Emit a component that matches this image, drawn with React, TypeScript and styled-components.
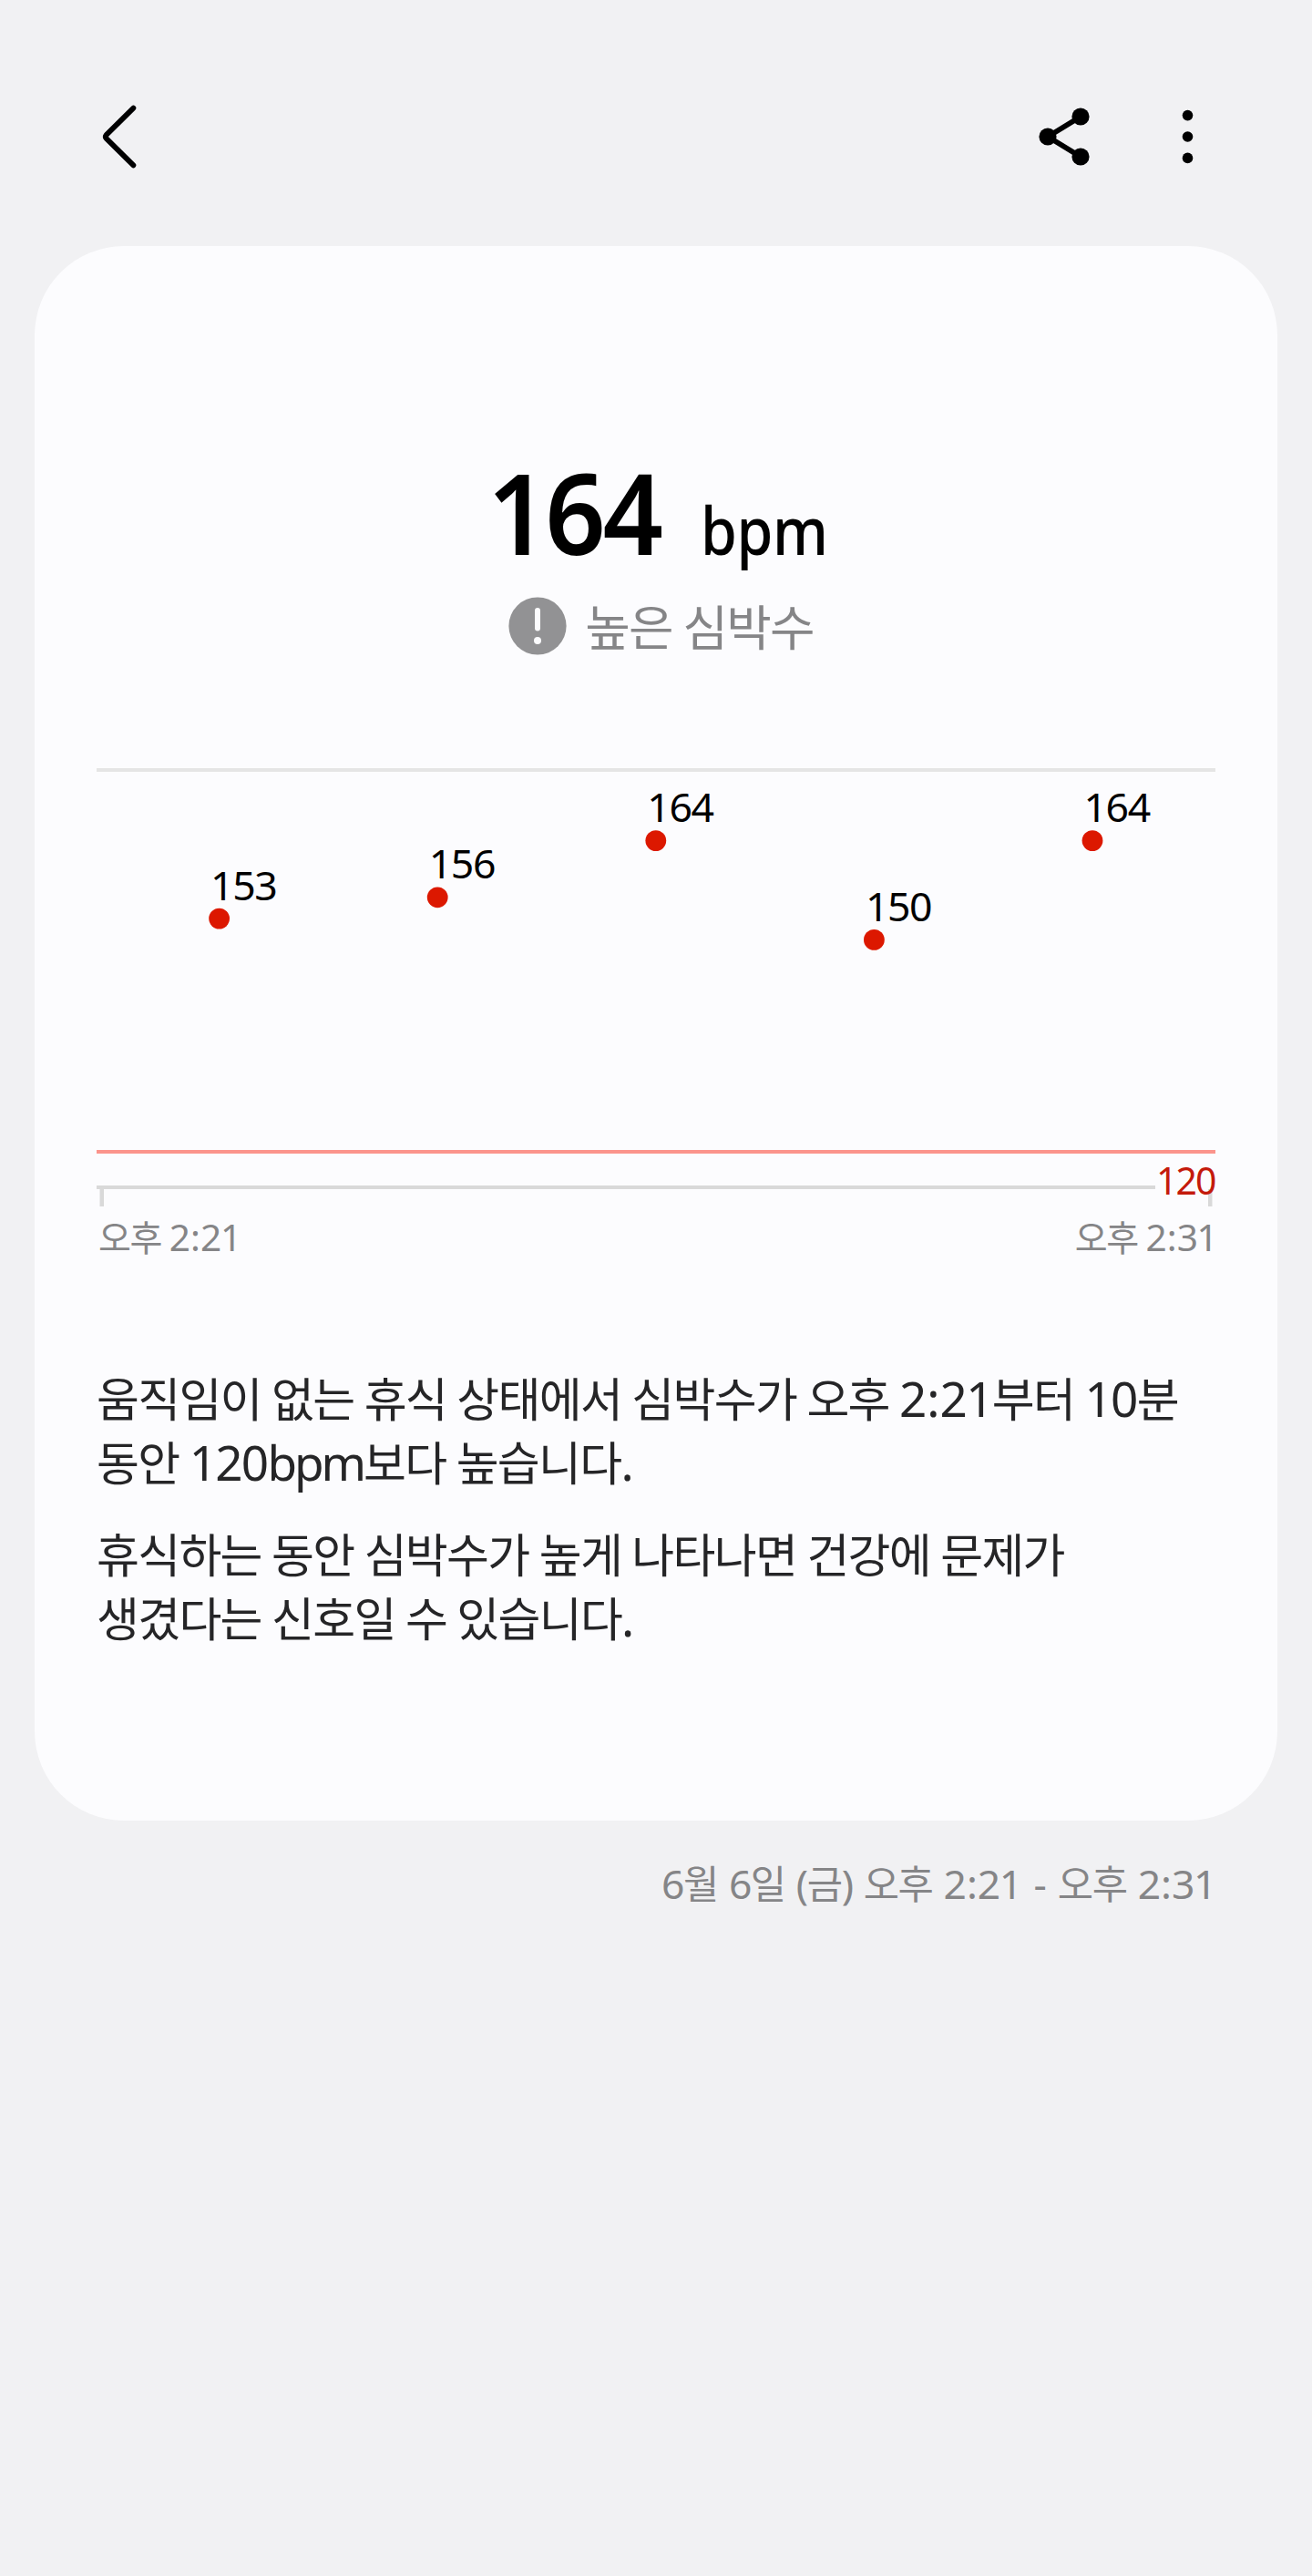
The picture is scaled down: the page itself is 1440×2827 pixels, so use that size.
import React from 'react';
import styled, { createGlobalStyle } from 'styled-components';

const GlobalStyle = createGlobalStyle`
  body {
    margin: 0;
    background: #f1f1f3;
    font-family: 'Noto Sans', 'Noto Sans CJK KR', sans-serif;
  }
`;

const Screen = styled.main`
  box-sizing: border-box;
  width: 1440px;
  min-height: 2827px;
  background: #f1f1f3;
`;

const Toolbar = styled.header`
  box-sizing: border-box;
  height: 270px;
  padding: 30px 100px 0 92px;
  display: flex;
  align-items: center;
  justify-content: space-between;
`;

const Actions = styled.div`
  display: flex;
  gap: 62px;
`;

const IconButton = styled.button`
  width: 72px;
  height: 72px;
  padding: 0;
  border: 0;
  background: none;
  color: #000;
  svg {
    display: block;
  }
`;

const Card = styled.section`
  box-sizing: border-box;
  height: 1728px;
  margin: 0 38px;
  padding: 208px 68px 0;
  border-radius: 98px;
  background: #fcfcfe;
`;

const Reading = styled.div`
  height: 168px;
  display: flex;
  justify-content: center;
  align-items: baseline;
  line-height: 168px;
  color: #000;
`;

const ReadingValue = styled.span`
  width: 202px;
  font-size: 123px;
  font-weight: 600;
  letter-spacing: -3.4px;
  transform: scaleX(0.945);
  transform-origin: left;
`;

const ReadingUnit = styled.span`
  width: 136px;
  margin-left: 32px;
  font-size: 72.5px;
  font-weight: 500;
  letter-spacing: -0.5px;
  transform: scaleX(0.888);
  transform-origin: left;
`;

const Status = styled.div`
  height: 64px;
  margin: 9px 0 124px;
  padding-left: 11px;
  display: flex;
  justify-content: center;
  align-items: center;
  gap: 20px;
  font-size: 56px;
  line-height: 64px;
  color: #858587;
`;

const RunText = styled.span<{ $wordSpacing?: string }>`
  letter-spacing: -0.032em;
  word-spacing: ${(p) => p.$wordSpacing ?? '-0.016em'};
  white-space: nowrap;
`;

const Hangul = styled.span`
  font-family: 'Noto Sans CJK KR', sans-serif;
  font-size: 0.962em;
  line-height: 0;
`;

const Mark = styled.span`
  padding: 0 0.033em;
`;

const Unit = styled.span`
  letter-spacing: -0.058em;
`;

const Chart = styled.svg`
  display: block;
  overflow: visible;
`;

const PointLabel = styled.text`
  font-size: 44.6px;
  letter-spacing: -1.4px;
  fill: #000;
`;

const LimitLabel = styled.text`
  font-size: 41px;
  letter-spacing: -2px;
  fill: #c41a0b;
`;

const TimeAxis = styled.div`
  height: 56px;
  margin-right: -1.5px;
  padding-left: 2px;
  display: flex;
  justify-content: space-between;
  font-size: 40.6px;
  line-height: 56px;
  color: #858587;
`;

const Description = styled.div`
  margin-top: 114px;
  display: flex;
  flex-direction: column;
  gap: 30.4px;
`;

const Paragraph = styled.p`
  margin: 0;
  font-size: 53px;
  line-height: 70.3px;
  color: #252527;
`;

const Period = styled.footer`
  padding: 37px 106px 0 0;
  text-align: right;
  font-size: 44.4px;
  line-height: 64px;
  color: #858587;
`;

/* Hangul runs are set slightly smaller than the Latin text around them. */
function Mixed({ children, wordSpacing }: { children: string; wordSpacing?: string }) {
  return (
    <RunText $wordSpacing={wordSpacing}>
      {children.split(/([가-힣]+|[:-]|bpm)/).map((run, i) => {
        if (i % 2 === 0) return run;
        if (run === ':' || run === '-') return <Mark key={i}>{run}</Mark>;
        if (run === 'bpm') return <Unit key={i}>{run}</Unit>;
        return <Hangul key={i}>{run}</Hangul>;
      })}
    </RunText>
  );
}

const LIMIT = 120;
const readings = [153, 156, 164, 150, 164];
const pointX = (index: number) => 134.6 + index * 239.6;
const pointY = (bpm: number) => 421.5 - (bpm - LIMIT) * 7.77;

function HeartRateChart() {
  return (
    <Chart width="1228" height="487" viewBox="0 0 1228 487">
      <rect y="0" width="1228" height="4" fill="#e5e5e5" />
      <rect y="419" width="1228" height="4" fill="#fb948c" />
      <rect y="458" width="1162" height="4" fill="#d9d9d9" />
      <rect x="3.5" y="462" width="4.5" height="19" fill="#d9d9d9" />
      <rect x="1220" y="462" width="4.5" height="19" fill="#d9d9d9" />
      {readings.map((bpm, i) => (
        <g key={i}>
          <circle cx={pointX(i)} cy={pointY(bpm)} r="11.4" fill="#dc1800" />
          <PointLabel x={pointX(i) - 9.5} y={pointY(bpm) - 20.4}>
            {bpm}
          </PointLabel>
        </g>
      ))}
      <LimitLabel x="1163" y="467.5">
        {LIMIT}
      </LimitLabel>
    </Chart>
  );
}

export default function App() {
  return (
    <>
      <GlobalStyle />
      <Screen>
        <Toolbar>
          <IconButton aria-label="뒤로">
            <svg width="72" height="72" viewBox="0 0 72 72" fill="none">
              <path
                d="M54.4 4.6 24.6 34.1Q23 36 24.6 37.9L54.4 67.4"
                stroke="currentColor"
                strokeWidth="5.8"
                strokeLinecap="round"
                strokeLinejoin="round"
              />
            </svg>
          </IconButton>
          <Actions>
            <IconButton aria-label="공유">
              <svg width="72" height="72" viewBox="0 0 72 72" fill="currentColor">
                <path d="M52 14 16 36 52 58" fill="none" stroke="currentColor" strokeWidth="5.6" />
                <circle cx="16" cy="36" r="9.6" />
                <circle cx="52" cy="14" r="9.6" />
                <circle cx="52" cy="58" r="9.6" />
              </svg>
            </IconButton>
            <IconButton aria-label="더보기">
              <svg width="72" height="72" viewBox="0 0 72 72" fill="currentColor">
                <circle cx="35.5" cy="12.6" r="5.8" />
                <circle cx="35.5" cy="36" r="5.8" />
                <circle cx="35.5" cy="59.4" r="5.8" />
              </svg>
            </IconButton>
          </Actions>
        </Toolbar>

        <Card>
          <Reading>
            <ReadingValue>164</ReadingValue>
            <ReadingUnit>bpm</ReadingUnit>
          </Reading>
          <Status>
            <svg width="64" height="64" viewBox="0 0 64 64">
              <circle cx="32" cy="32" r="31.6" fill="#929294" />
              <path d="M32 15V34.5" stroke="#fcfcfe" strokeWidth="6" strokeLinecap="round" />
              <circle cx="32" cy="48" r="4" fill="#fcfcfe" />
            </svg>
            <Mixed>높은 심박수</Mixed>
          </Status>

          <HeartRateChart />
          <TimeAxis>
            <Mixed>오후 2:21</Mixed>
            <Mixed>오후 2:31</Mixed>
          </TimeAxis>

          <Description>
            <Paragraph>
              <Mixed>움직임이 없는 휴식 상태에서 심박수가 오후 2:21부터 10분</Mixed>
              <br />
              <Mixed>동안 120bpm보다 높습니다.</Mixed>
            </Paragraph>
            <Paragraph>
              <Mixed>휴식하는 동안 심박수가 높게 나타나면 건강에 문제가</Mixed>
              <br />
              <Mixed>생겼다는 신호일 수 있습니다.</Mixed>
            </Paragraph>
          </Description>
        </Card>

        <Period>
          <Mixed wordSpacing="0.045em">6월 6일 (금) 오후 2:21 - 오후 2:31</Mixed>
        </Period>
      </Screen>
    </>
  );
}
